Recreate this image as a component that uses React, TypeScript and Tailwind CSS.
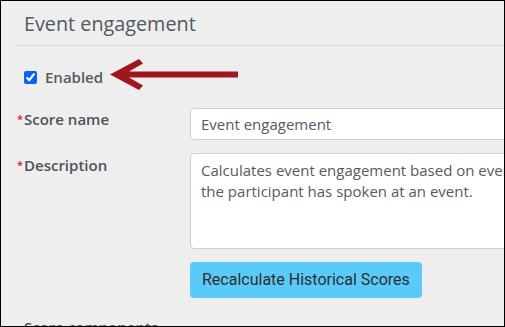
import React from 'react';

const font = { fontFamily: '"Open Sans", "Noto Sans", sans-serif' };

function Arrow() {
  return (
    <svg width="132" height="34" viewBox="107 61 132 34" className="shrink-0">
      <polygon
        points="109,77.5 138,62 142,66.5 128,74.5 237,74.5 237,80.5 128,80.5 142,88.5 138,93"
        fill="#a0161f"
      />
    </svg>
  );
}

export default function App() {
  return (
    <div
      className="w-[505px] h-[327px] border border-black bg-[#eeeeee] overflow-hidden text-[#555b63]"
      style={font}
    >
      {/* header */}
      <div className="pl-[13px]">
        <h2 className="pl-[10px] pt-[11px] pb-[9px] text-[19.8px] leading-[24px] font-normal text-[#525962] border-b border-[#d9d9d9]">
          Event engagement
        </h2>
      </div>

      <div className="pl-[23px]">
        {/* enabled row */}
        <div className="flex items-center h-[34px] mt-[14px]">
          <input type="checkbox" defaultChecked className="w-[13px] h-[13px] accent-[#0b63f6] m-0" />
          <span className="ml-[8px] text-[15px] font-semibold text-[#555b63]">Enabled</span>
          <div className="ml-[5px] -mt-[4px]">
            <Arrow />
          </div>
        </div>

        {/* form */}
        <div className="grid grid-cols-[166px_1fr] gap-y-[13px] mt-[14px]">
          <label className="relative text-[15px] font-semibold leading-[22px] text-[#4c535b]">
            <span className="absolute -left-[7px] top-[0px] text-[11px] text-[#d7141a]">*</span>
            Score name
          </label>
          <div className="h-[32px] w-[330px] bg-white border border-[#cfcfcf] rounded-[4px] pl-[10px] flex items-center text-[15px] text-[#555b63]">
            Event engagement
          </div>

          <label className="relative text-[15px] font-semibold leading-[22px] pt-[1px] text-[#4c535b]">
            <span className="absolute -left-[7px] top-[1px] text-[11px] text-[#d7141a]">*</span>
            Description
          </label>
          <div className="h-[96px] w-[330px] bg-white border border-[#cfcfcf] rounded-[4px] pl-[10px] pt-[6px] text-[15px] leading-[21px] text-[#555b63] whitespace-nowrap overflow-hidden">
            Calculates event engagement based on every time
            <br />
            the participant has spoken at an event.
          </div>

          <div />
          <div>
            <button
              className="h-[36px] px-[12px] bg-[#5bcaf8] rounded-[4px] text-[16px] text-[#2b2f33]"
              style={{ fontFamily: 'Roboto, "Liberation Sans", sans-serif' }}
            >
              Recalculate Historical Scores
            </button>
          </div>
        </div>

        <div className="mt-[18px] text-[15px] font-semibold text-[#4c535b]">Score components</div>
      </div>
    </div>
  );
}
